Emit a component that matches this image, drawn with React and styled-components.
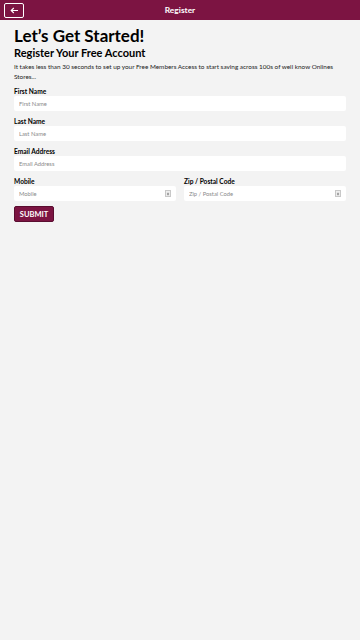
import React from "react";
import styled, { createGlobalStyle } from "styled-components";

const Global = createGlobalStyle`
  html, body { margin: 0; padding: 0; background: #f3f3f3; }
  body { font-family: Lato, "Open Sans", sans-serif; color: #000; }
  * { box-sizing: border-box; }
`;

const Page = styled.div`
  width: 360px;
  min-height: 640px;
  background: #f3f3f3;
`;

const Header = styled.header`
  height: 20px;
  background: #7c1442;
  display: flex;
  align-items: center;
  padding: 0 4px;
`;

const BackButton = styled.button`
  width: 20px;
  height: 15px;
  border: 1px solid #fff;
  border-radius: 2px;
  background: transparent;
  display: flex;
  align-items: center;
  justify-content: center;
  padding: 0;
  color: #fff;
`;

const HeaderTitle = styled.div`
  flex: 1;
  text-align: center;
  color: #fff;
  font-size: 8.4px;
  font-weight: 700;
  margin-right: 20px;
`;

const Content = styled.main`
  padding: 6px 14px 0 14px;
`;

const Title = styled.h1`
  margin: 0;
  font-size: 17px;
  font-weight: 700;
  line-height: 20px;
`;

const Subtitle = styled.h2`
  margin: 0;
  font-size: 11px;
  font-weight: 700;
  line-height: 13px;
`;

const Intro = styled.p`
  margin: 3px 0 5px;
  font-size: 6.4px;
  line-height: 10px;
  color: #222;
`;

const Form = styled.form`
  display: flex;
  flex-direction: column;
`;

const Field = styled.div`
  display: flex;
  flex-direction: column;
  margin-top: ${(p) => p.$top || 0}px;
`;

const Label = styled.label`
  display: block;
  font-size: 6.6px;
  font-weight: 700;
  line-height: 9px;
  height: 9px;
`;

const InputWrap = styled.div`
  position: relative;
`;

const Input = styled.input`
  display: block;
  width: 100%;
  height: 15px;
  border: none;
  border-radius: 2px;
  background: #fff;
  font-family: Lato, "Open Sans", sans-serif;
  font-size: 5.8px;
  padding: 0 5px;
  outline: none;
  &::placeholder { color: #8a8a8a; }
`;

const Spinner = styled.span`
  position: absolute;
  right: 5px;
  top: 4px;
  width: 6px;
  height: 7px;
  display: flex;
  align-items: center;
  justify-content: center;
  border: 0.5px solid #c8c8c8;
  background: #eee;
`;

const Row = styled.div`
  display: grid;
  grid-template-columns: 1fr 1fr;
  column-gap: 8px;
  margin-top: 6px;
`;

const Submit = styled.button`
  margin-top: 5px;
  align-self: flex-start;
  width: 40px;
  height: 16px;
  background: #7c1442;
  color: #fff;
  border: 1px solid #5a0d30;
  border-radius: 2px;
  font-family: Lato, "Open Sans", sans-serif;
  font-weight: 700;
  font-size: 7.5px;
  padding: 0;
`;

const SpinIcon = () => (
  <Spinner>
    <svg width="5" height="6" viewBox="0 0 5 6">
      <path d="M1 2.6 L2.5 1 L4 2.6 Z" fill="#777" />
      <path d="M1 3.4 L2.5 5 L4 3.4 Z" fill="#777" />
    </svg>
  </Spinner>
);

export default function App() {
  return (
    <Page>
      <Global />
      <Header>
        <BackButton aria-label="back">
          <svg width="9" height="7" viewBox="0 0 9 7">
            <path d="M8 3.5 H1.5 M3.8 1 L1.2 3.5 L3.8 6" stroke="#fff" strokeWidth="1.1" fill="none" />
          </svg>
        </BackButton>
        <HeaderTitle>Register</HeaderTitle>
      </Header>
      <Content>
        <Title>Let’s Get Started!</Title>
        <Subtitle>Register Your Free Account</Subtitle>
        <Intro>
          It takes less than 30 seconds to set up your Free Members Access to start saving across 100s of well know Onlines Stores...
        </Intro>
        <Form onSubmit={(e) => e.preventDefault()}>
          <Field>
            <Label>First Name</Label>
            <Input placeholder="First Name" />
          </Field>
          <Field $top={6}>
            <Label>Last Name</Label>
            <Input placeholder="Last Name" />
          </Field>
          <Field $top={6}>
            <Label>Email Address</Label>
            <Input placeholder="Email Address" />
          </Field>
          <Row>
            <Field>
              <Label>Mobile</Label>
              <InputWrap>
                <Input placeholder="Mobile" />
                <SpinIcon />
              </InputWrap>
            </Field>
            <Field>
              <Label>Zip / Postal Code</Label>
              <InputWrap>
                <Input placeholder="Zip / Postal Code" />
                <SpinIcon />
              </InputWrap>
            </Field>
          </Row>
          <Submit type="submit">SUBMIT</Submit>
        </Form>
      </Content>
    </Page>
  );
}
